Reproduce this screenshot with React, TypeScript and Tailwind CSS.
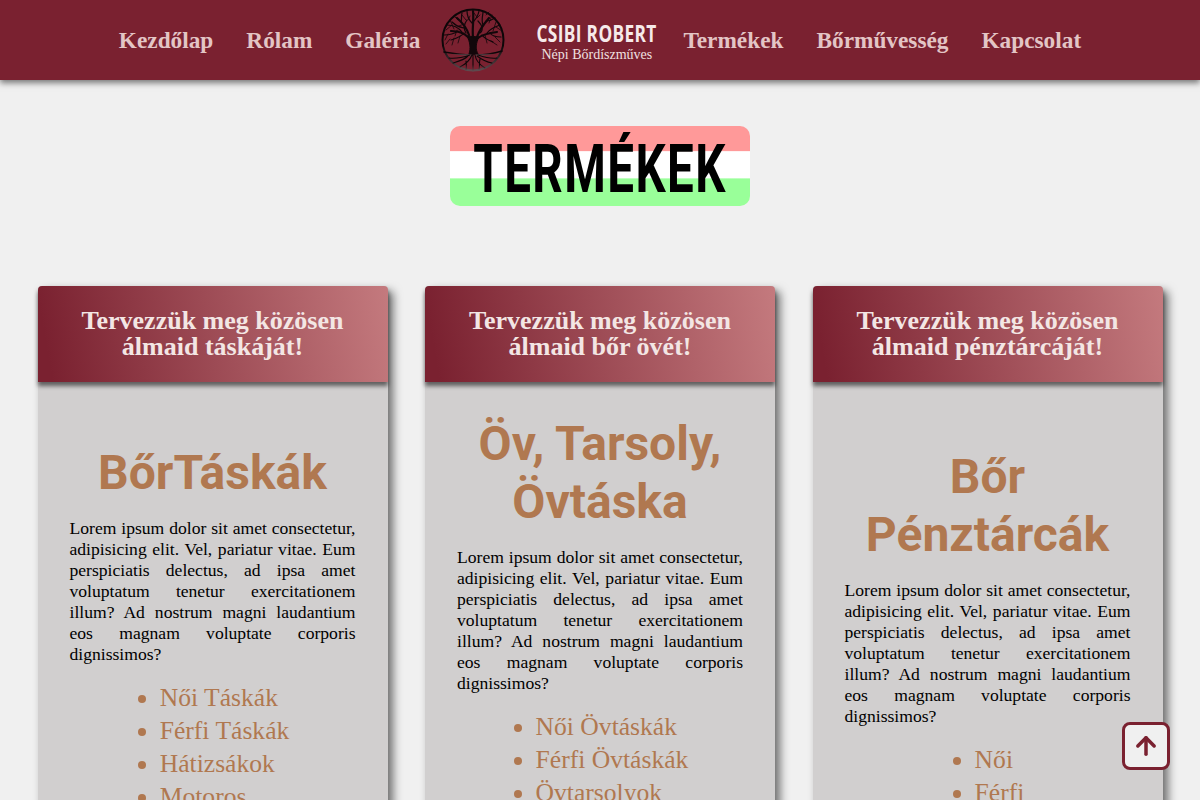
import { ArrowUp } from "lucide-react";

const lorem =
  "Lorem ipsum dolor sit amet consectetur, adipisicing elit. Vel, pariatur vitae. Eum perspiciatis delectus, ad ipsa amet voluptatum tenetur exercitationem illum? Ad nostrum magni laudantium eos magnam voluptate corporis dignissimos?";

const cards = [
  { head: ["Tervezzük meg közösen", "álmaid táskáját!"], title: "BőrTáskák", items: ["Női Táskák", "Férfi Táskák", "Hátizsákok", "Motoros"] },
  { head: ["Tervezzük meg közösen", "álmaid bőr övét!"], title: "Öv, Tarsoly, Övtáska", items: ["Női Övtáskák", "Férfi Övtáskák", "Övtarsolyok", "Bőr Övek"] },
  { head: ["Tervezzük meg közösen", "álmaid pénztárcáját!"], title: "Bőr Pénztárcák", items: ["Női", "Férfi"] },
];

function NavLink({ children }: { children: string }) {
  return <a className="mt-[1px] font-['Liberation_Serif',serif] text-[23.3px] font-bold leading-none text-[#e3c5c5] whitespace-nowrap">{children}</a>;
}

function Logo() {
  return (
    <svg width="66" height="66" viewBox="0 0 66 66" className="shrink-0 ml-[20px] mr-[30px]" fill="none">
      <defs>
        <linearGradient id="fade" x1="0" y1="0" x2="0" y2="1">
          <stop offset="0.6" stopColor="#0d0608" />
          <stop offset="1" stopColor="#5d4a4e" />
        </linearGradient>
      </defs>
      <circle cx="33" cy="33" r="30.5" stroke="url(#fade)" strokeWidth="2" />
      <g stroke="#12070a" strokeLinecap="round" fill="none">
        <path d="M29 47 C31 41 30 35 27 29 L39 30 C36 36 35 42 38 47 Z" fill="#12070a" strokeWidth="1" />
        <path d="M28 30 C24 26 18 24 11 24 M29 28 C27 22 24 17 17 11 M33 30 C32 22 34 14 33 4 M37 30 C39 24 43 18 49 11 M38 31 C43 27 49 26 57 25" strokeWidth="2.2" />
        <path d="M22 25 C18 20 13 18 7 18 M24 21 C20 20 17 20 12 15 M21 15 C22 12 21 9 22 6 M32 16 C29 13 27 10 27 4 M33 15 C36 12 38 9 39 4 M43 18 C41 13 43 8 43 5 M46 14 C50 14 52 13 55 11 M47 26 C51 21 55 20 60 18 M50 26 C52 29 56 30 61 30 M18 24 C14 27 10 28 4 28 M24 26 C21 30 17 31 11 33 M42 28 C45 32 48 33 53 35 M26 26 C23 21 24 17 27 13 M40 26 C44 23 42 18 38 14" strokeWidth="1.2" />
        <path d="M14 22 L10 13 M17 23 L15 29 M26 13 L22 8 M37 10 L34 6 M49 16 L52 8 M53 24 L56 15 M45 28 L47 36 M20 29 L18 36 M12 18 L6 23 M56 20 L62 24 M8 27 L5 33 M10 32 L6 37 M14 31 L12 38 M51 34 L57 38 M55 30 L60 35 M30 9 L28 13 M40 8 L37 11 M46 8 L49 5 M18 13 L14 9 M24 17 L19 19" strokeWidth="0.8" />
      </g>
      <g stroke="url(#fade)" strokeLinecap="round" fill="none">
        <path d="M4 45 C16 47 24 48 31 48 M36 48 C44 48 52 47 62 44" strokeWidth="1.6" />
        <path d="M32 48 C30 53 26 57 20 60 M30 48 C24 50 18 52 9 51 M35 48 C36 54 40 58 45 61 M38 48 C44 50 50 52 57 51 M33 48 C33 54 33 58 33 64 M37 49 C41 52 46 55 52 56 M28 49 C24 53 20 54 13 56 M40 52 C39 56 40 59 39 62 M26 54 C26 57 27 60 26 63" strokeWidth="1.1" />
      </g>
    </svg>
  );
}

function Card({ head, title, items }: { head: string[]; title: string; items: string[] }) {
  return (
    <section className="w-[350px] flex flex-col rounded-t-[4px] bg-[#d1cfcf] shadow-[5px_5px_10px_rgba(0,0,0,0.55)]">
      <div className="h-[96px] flex flex-col justify-center items-center rounded-t-[4px] bg-[linear-gradient(80deg,#7a2130_4%,#c47a7e_100%)] shadow-[0_4px_4px_rgba(0,0,0,0.55)] font-['Liberation_Serif',serif] text-[26px] font-bold leading-[26px] text-[#f3e6e4]">
        {head.map((h) => (
          <div key={h} className="whitespace-nowrap">{h}</div>
        ))}
      </div>
      <div className="flex-1 flex flex-col justify-center px-8 pt-[33px] pb-8">
        <h2 className="font-['Roboto',sans-serif] text-[48px] font-bold leading-[58px] text-center text-[#b07850]">{title}</h2>
        <p className="mt-[16px] font-['Liberation_Serif',serif] text-[17.6px] leading-[21px] text-black text-justify">{lorem}</p>
        <ul className="mt-[16px] w-fit mx-auto pl-6 list-disc font-['Liberation_Serif',serif] text-[25.6px] leading-[33px] text-[#b07850]">
          {items.map((i) => (
            <li key={i} className="whitespace-nowrap">{i}</li>
          ))}
        </ul>
      </div>
    </section>
  );
}

export default function App() {
  return (
    <div className="h-[800px] overflow-hidden bg-[#f0f0f0]">
      <header className="h-[80px] flex items-center justify-center bg-[#7a2130] shadow-[0_3px_6px_rgba(0,0,0,0.5)] relative">
        <nav className="flex items-center gap-[33px]">
          <NavLink>Kezdőlap</NavLink>
          <NavLink>Rólam</NavLink>
          <NavLink>Galéria</NavLink>
        </nav>
        <Logo />
        <div className="flex flex-col items-center w-[121px] mt-[2px]">
          <div className="font-['Open_Sans',sans-serif] text-[24px] font-bold leading-[24px] tracking-[0.5px] text-[#f6eaea] whitespace-nowrap scale-x-[0.72]">CSIBI ROBERT</div>
          <div className="font-['Liberation_Serif',serif] text-[14px] leading-[14px] mt-[3px] text-[#f0e0e0] whitespace-nowrap">Népi Bőrdíszműves</div>
        </div>
        <nav className="flex items-center gap-[33px] ml-[26px]">
          <NavLink>Termékek</NavLink>
          <NavLink>Bőrművesség</NavLink>
          <NavLink>Kapcsolat</NavLink>
        </nav>
      </header>
      <main>
        <div className="w-[300px] h-[80px] mx-auto mt-[46px] mb-[80px] pt-[8px] rounded-[10px] flex items-center justify-center bg-[linear-gradient(#ff9999_31%,#ffffff_32%,#ffffff_65%,#99ff99_66%)]">
          <h1 className="font-['Roboto',sans-serif] text-[66px] font-bold leading-none text-black tracking-[2px] whitespace-nowrap scale-x-[0.72]">TERMÉKEK</h1>
        </div>
        <div className="flex items-stretch justify-evenly">
          {cards.map((c) => (
            <Card key={c.title} {...c} />
          ))}
        </div>
      </main>
      <button className="fixed left-[1122px] top-[722px] w-[48px] h-[48px] rounded-[8px] border-[3px] border-[#7a2130] bg-[#f0f0f0] flex items-center justify-center text-[#7a2130]">
        <ArrowUp size={28} strokeWidth={3} />
      </button>
    </div>
  );
}
